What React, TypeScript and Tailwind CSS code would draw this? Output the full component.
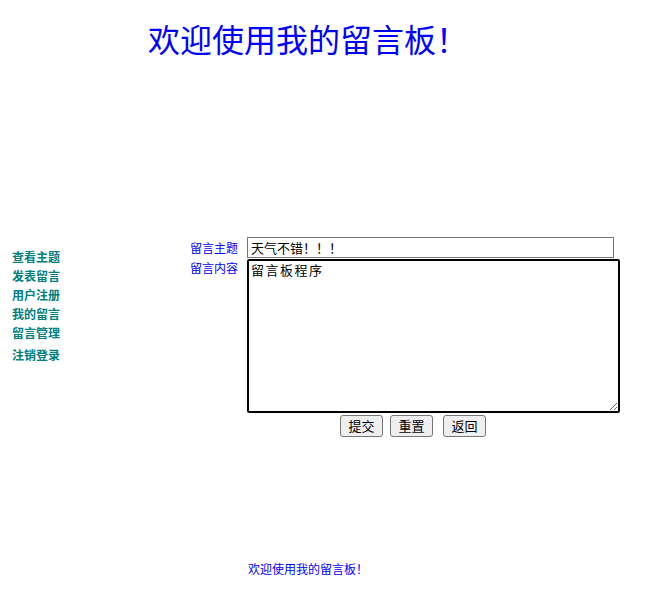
import { useState } from "react";

const navItems = ["查看主题", "发表留言", "用户注册", "我的留言", "留言管理"];

const App = () => {
  const [title, setTitle] = useState("天气不错！！！");
  const [content, setContent] = useState("留言板程序");

  return (
    <div
      className="w-[652px] h-[597px] bg-white overflow-hidden"
      style={{ fontFamily: '"Noto Sans CJK SC", "Noto Sans", sans-serif' }}
    >
      <h1 className="mt-[18px] h-[40px] leading-[40px] pl-[148px] text-[32px] text-[#0000ff] font-normal">
        欢迎使用我的留言板！
      </h1>

      <div className="mt-[179px] flex">
        <div className="w-[190px] pl-[12px] pt-[10px] text-[12px] font-bold text-[#008080]">
          {navItems.map((item) => (
            <div key={item} className="leading-[19px]">
              {item}
            </div>
          ))}
          <div className="leading-[19px] mt-[3px]">注销登录</div>
        </div>

        <div className="flex flex-col">
          <div className="flex items-center">
            <span className="w-[57px] text-[12px] text-[#0000ff] leading-[16px]">留言主题</span>
            <input
              value={title}
              onChange={(e) => setTitle(e.target.value)}
              className="w-[367px] h-[21px] border border-[#767676] px-[3px] text-[13px] text-black outline-none"
            />
          </div>
          <div className="flex items-start mt-[1px]">
            <span className="w-[57px] text-[12px] text-[#0000ff] leading-[16px] pt-[1px]">留言内容</span>
            <textarea
              value={content}
              onChange={(e) => setContent(e.target.value)}
              className="w-[373px] h-[154px] border-2 border-black rounded-[2px] px-[2px] py-[1px] text-[13px] tracking-[1.5px] leading-[16px] text-black outline-none"
            />
          </div>
          <div className="flex mt-[2px] pl-[150px] text-[13px]">
            <button className="w-[43px] h-[22px] bg-[#efefef] border border-[#767676] rounded-[3px]">
              提交
            </button>
            <button className="ml-[7px] w-[43px] h-[22px] bg-[#efefef] border border-[#767676] rounded-[3px]">
              重置
            </button>
            <button className="ml-[10px] w-[43px] h-[22px] bg-[#efefef] border border-[#767676] rounded-[3px]">
              返回
            </button>
          </div>
        </div>
      </div>

      <p className="mt-[124px] pl-[248px] text-[12px] leading-[16px] text-[#0000ff]">
        欢迎使用我的留言板！
      </p>
    </div>
  );
};

export default App;
